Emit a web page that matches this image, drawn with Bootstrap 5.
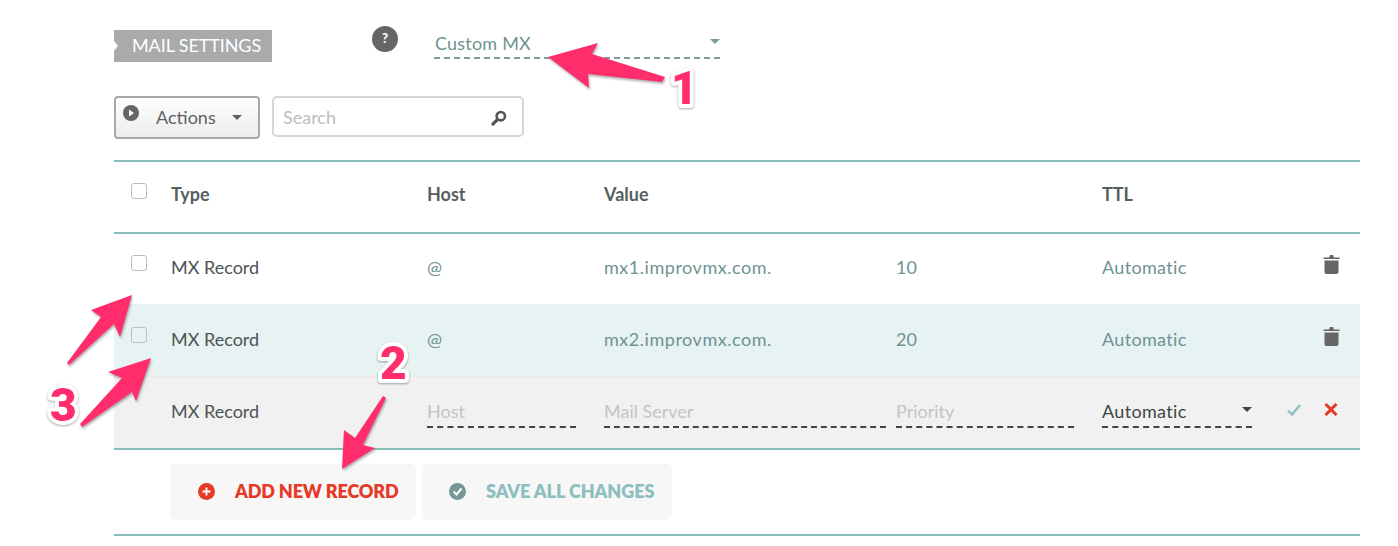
<!DOCTYPE html>
<html lang="en">
<head>
<meta charset="utf-8">
<title>Mail settings</title>
<link rel="stylesheet" href="https://cdn.jsdelivr.net/npm/bootstrap@5.3.0/dist/css/bootstrap.min.css">
<style>
html,body{margin:0;background:#fff;height:546px;overflow:hidden}
body{font-family:Lato,"Open Sans",sans-serif;font-size:18px;color:#4d5452;position:relative}
.page-wrap{padding:28px 38px 0 114px}
.top-line{height:34px;margin-bottom:34px}
.tag-label{width:158px;height:32px;margin-top:2px;background:#a9aaab;color:#fff;font-size:18px;line-height:30px;padding-left:18px;clip-path:polygon(0 0,100% 0,100% 100%,0 100%,0 66%,4px 50%,0 34%);letter-spacing:-.1px}
.help-dot{width:26px;height:26px;border-radius:50%;background:#666;color:#fff;font-weight:900;font-size:13px;margin-left:100px;margin-top:-2px}
.mx-select{width:286px;height:31px;margin-left:36px;border-bottom:2px dashed #7f9c9c;color:#6f9292;font-size:18px;padding-left:1px;line-height:30px;letter-spacing:.2px}
.caret-down{width:0;height:0;border-left:5px solid transparent;border-right:5px solid transparent;border-top:5px solid currentColor}
.mx-caret{margin-top:11px;color:#7f9c9c}
.ttl-caret{margin-top:9px}
.actions-btn{width:146px;height:43px;border:2px solid #a5a9a9;border-radius:4px;background:linear-gradient(#fff,#ececec);color:#5d6361;position:relative;padding-left:40px}
.play-dot{position:absolute;left:7px;top:7px}
.search-box{width:252px;height:41px;margin-left:12px;border:2px solid #d6d6d6;border-radius:5px;padding:2px 15px 0 9px;color:#bdbdbd}
.toolbar-line{height:43px;margin-bottom:21px}
.record-table{border-top:2px solid #86bdb9;border-bottom:2px solid #86bdb9}
.rec-row{display:grid;grid-template-columns:57px 256px 177px 292px 206px 183px 1fr;align-items:center}
.rec-head{height:72px;padding-bottom:6px;font-weight:700;color:#56605e;border-bottom:2px solid #86bdb9}
.rec-one{height:71px;padding-bottom:4px;border-bottom:1px solid #ebebeb}
.rec-two{height:72px;padding-bottom:2px;background:#e7f2f2;border-bottom:2px solid #e9ebeb}
.rec-edit{height:71px;padding-bottom:2px;background:#f1f1f1}
.soft-val{color:#6f9292}
.auto-val{letter-spacing:.33px}
.host-val{letter-spacing:.53px}
.box-mark{width:16px;height:16px;border:1px solid #bdbdbd;border-radius:3px;margin-left:17px;margin-top:-8px;background:#fff}
.rec-head .box-mark{margin-top:-6px}
.rec-two .box-mark{background:transparent}
.ghost-input{height:31px;margin-top:2px;border-bottom:2px dashed #444;color:#c4c4c4;line-height:26px;padding-top:1px}
.gap-host{margin-right:28px}
.gap-mail{margin-right:10px}
.ttl-select{width:150px;color:#3f4745;letter-spacing:.33px}
.trash-cell{padding-left:38px;margin-top:-10px}
.foot-row{padding:14px 0 14px 56px;gap:6px;border-bottom:2px solid #86bdb9}
.foot-btn{height:56px;padding-bottom:2px;background:#f7f7f7;border-radius:5px;font-weight:800;font-size:18px}
.add-btn{width:246px;color:#e53a28;padding-left:28px;gap:20px;letter-spacing:-.14px}
.save-btn{width:250px;color:#8cbfbe;padding-left:27px;gap:20px;letter-spacing:-.05px}
.edit-acts{gap:23px;padding-left:2px;margin-top:-4px}
.note-layer{position:absolute;left:0;top:0;width:1398px;height:546px;pointer-events:none}
.note-layer .arrow{fill:#ff2d6c;filter:drop-shadow(1px 2px 1px rgba(0,0,0,.3))}
.note-layer text{font-family:Roboto,"Liberation Sans",sans-serif;font-weight:900;font-size:46px;fill:#ff2d6c;stroke:#fff;stroke-width:8px;paint-order:stroke;stroke-linejoin:round;filter:drop-shadow(0 1px 1px rgba(0,0,0,.35))}
</style>
</head>
<body>
<div class="page-wrap">
  <div class="top-line d-flex align-items-start">
    <div class="tag-label">MAIL SETTINGS</div>
    <div class="help-dot d-flex align-items-center justify-content-center">?</div>
    <div class="mx-select d-flex justify-content-between">
      <span>Custom MX</span><span class="caret-down mx-caret"></span>
    </div>
  </div>
  <div class="toolbar-line d-flex align-items-start">
    <div class="actions-btn d-flex align-items-center">
      <svg class="play-dot" width="16" height="16" viewBox="0 0 16 16"><circle cx="8" cy="8" r="8" fill="#666"/><path d="M6 4.500l5 3.500-5 3.500z" fill="#fff"/></svg>
      <span>Actions</span><span class="caret-down ms-3"></span>
    </div>
    <div class="search-box d-flex align-items-center justify-content-between">
      <span>Search</span>
      <svg width="16" height="16" viewBox="0 0 16 16"><circle cx="9.800" cy="6.200" r="4.200" fill="none" stroke="#555" stroke-width="2.600"/><path d="M6.600 9.400L2 14" stroke="#555" stroke-width="3.200" stroke-linecap="round"/></svg>
    </div>
  </div>
  <div class="record-table">
    <div class="rec-row rec-head">
      <div><div class="box-mark"></div></div><div>Type</div><div>Host</div><div>Value</div><div></div><div>TTL</div><div></div>
    </div>
    <div class="rec-row rec-one">
      <div><div class="box-mark"></div></div><div>MX Record</div><div class="soft-val">@</div><div class="soft-val host-val">mx1.improvmx.com.</div><div class="soft-val">10</div><div class="soft-val auto-val">Automatic</div>
      <div class="trash-cell"><svg width="17" height="20" viewBox="0 0 16 20"><path d="M0 3.500h16v1.600H0zM5.500 3.500L6.500 1h3l1 2.500z" fill="#666"/><path d="M1 6.500h14V18a2 2 0 0 1-2 2H3a2 2 0 0 1-2-2z" fill="#666"/></svg></div>
    </div>
    <div class="rec-row rec-two">
      <div><div class="box-mark"></div></div><div>MX Record</div><div class="soft-val">@</div><div class="soft-val host-val">mx2.improvmx.com.</div><div class="soft-val">20</div><div class="soft-val auto-val">Automatic</div>
      <div class="trash-cell"><svg width="17" height="20" viewBox="0 0 16 20"><path d="M0 3.500h16v1.600H0zM5.500 3.500L6.500 1h3l1 2.500z" fill="#666"/><path d="M1 6.500h14V18a2 2 0 0 1-2 2H3a2 2 0 0 1-2-2z" fill="#666"/></svg></div>
    </div>
    <div class="rec-row rec-edit">
      <div></div><div>MX Record</div>
      <div><div class="ghost-input gap-host">Host</div></div>
      <div><div class="ghost-input gap-mail">Mail Server</div></div>
      <div><div class="ghost-input gap-host">Priority</div></div>
      <div><div class="ghost-input ttl-select d-flex justify-content-between"><span>Automatic</span><span class="caret-down ttl-caret"></span></div></div>
      <div class="edit-acts d-flex align-items-center">
        <svg width="14" height="12" viewBox="0 0 14 12"><path d="M1 6.500L5 10.500 13 1" fill="none" stroke="#8cbfbe" stroke-width="2.400"/></svg>
        <svg width="14" height="13" viewBox="0 0 14 13"><path d="M1.500 1L12.500 12M12.500 1L1.500 12" fill="none" stroke="#e53a28" stroke-width="3"/></svg>
      </div>
    </div>
  </div>
  <div class="foot-row d-flex">
    <div class="foot-btn add-btn d-flex align-items-center">
      <svg width="17" height="17" viewBox="0 0 17 17"><circle cx="8.500" cy="8.500" r="8.500" fill="#e53a28"/><path d="M8.500 4.500v8M4.500 8.500h8" stroke="#fff" stroke-width="1.800"/></svg>
      <span>ADD NEW RECORD</span>
    </div>
    <div class="foot-btn save-btn d-flex align-items-center">
      <svg width="17" height="17" viewBox="0 0 17 17"><circle cx="8.500" cy="8.500" r="8.500" fill="#769595"/><path d="M4.500 8.500l3 3 5-6" fill="none" stroke="#fff" stroke-width="2"/></svg>
      <span>SAVE ALL CHANGES</span>
    </div>
  </div>
</div>
<svg class="note-layer" viewBox="0 0 1398 546">
  <polygon class="arrow" points="548,57 598,43 592,54 665,77 662,82 588,74 589,88"/>
  <polygon class="arrow" points="342,469 344,430 355,438 383,396 386,398 363,445 375,448"/>
  <polygon class="arrow" points="132,295 91,310 101,317 67,363 69,365 114,324 120,337"/>
  <polygon class="arrow" points="151,358 108,372 122,378 80,424 82,427 132,392 136,401"/>
  <text x="671" y="104">1</text>
  <text x="380" y="379">2</text>
  <text x="50" y="421">3</text>
</svg>
</body>
</html>
